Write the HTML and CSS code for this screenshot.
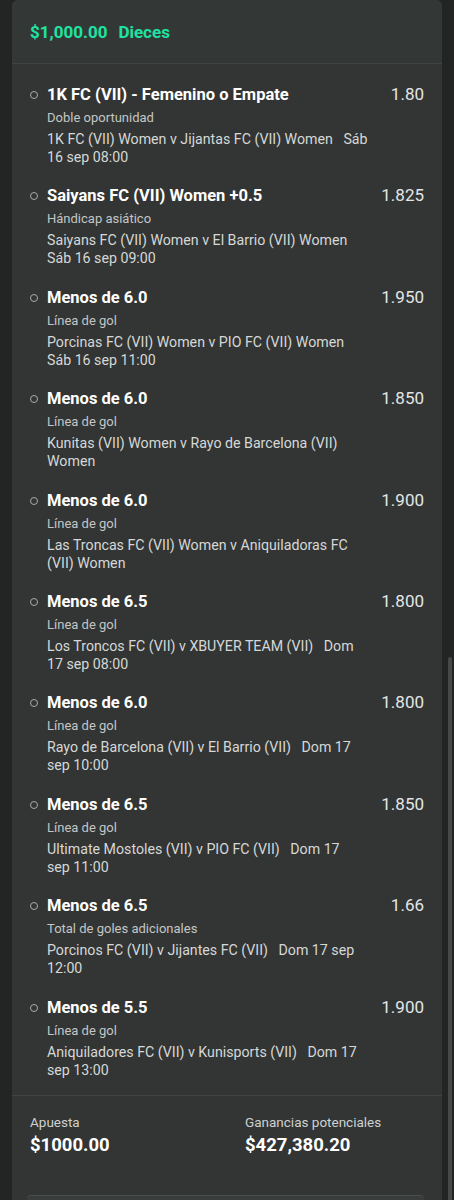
FILE: index.html
```html
<!DOCTYPE html>
<html lang="es">

<head>
	<meta charset="UTF-8">
	<meta name="viewport" content="width=device-width, initial-scale=1.0">
	<title>Boleto</title>
	<link rel="stylesheet" href="styles.css">
</head>

<body>
	<div class="slip">
		<div class="slip-head">
			<span class="stake-amount">$1,000.00</span>
			<span class="bet-type">Dieces</span>
		</div>

		<div class="legs">
			<div class="leg">
				<span class="dot"></span>
				<div class="leg-info">
					<div class="leg-title">1K FC (VII) - Femenino o Empate</div>
					<div class="leg-market">Doble oportunidad</div>
					<div class="leg-match"><span class="leg-teams">1K FC (VII) Women v Jijantas FC (VII) Women</span> Sáb 16 sep 08:00</div>
				</div>
				<div class="leg-odds">1.80</div>
			</div>

			<div class="leg">
				<span class="dot"></span>
				<div class="leg-info">
					<div class="leg-title">Saiyans FC (VII) Women +0.5</div>
					<div class="leg-market">Hándicap asiático</div>
					<div class="leg-match"><span class="leg-teams">Saiyans FC (VII) Women v El Barrio (VII) Women</span> Sáb 16 sep 09:00</div>
				</div>
				<div class="leg-odds">1.825</div>
			</div>

			<div class="leg">
				<span class="dot"></span>
				<div class="leg-info">
					<div class="leg-title">Menos de 6.0</div>
					<div class="leg-market">Línea de gol</div>
					<div class="leg-match"><span class="leg-teams">Porcinas FC (VII) Women v PIO FC (VII) Women</span> Sáb 16 sep 11:00</div>
				</div>
				<div class="leg-odds">1.950</div>
			</div>

			<div class="leg">
				<span class="dot"></span>
				<div class="leg-info">
					<div class="leg-title">Menos de 6.0</div>
					<div class="leg-market">Línea de gol</div>
					<div class="leg-match"><span class="leg-teams">Kunitas (VII) Women v Rayo de Barcelona (VII) Women</span></div>
				</div>
				<div class="leg-odds">1.850</div>
			</div>

			<div class="leg">
				<span class="dot"></span>
				<div class="leg-info">
					<div class="leg-title">Menos de 6.0</div>
					<div class="leg-market">Línea de gol</div>
					<div class="leg-match"><span class="leg-teams">Las Troncas FC (VII) Women v Aniquiladoras FC (VII) Women</span></div>
				</div>
				<div class="leg-odds">1.900</div>
			</div>

			<div class="leg">
				<span class="dot"></span>
				<div class="leg-info">
					<div class="leg-title">Menos de 6.5</div>
					<div class="leg-market">Línea de gol</div>
					<div class="leg-match"><span class="leg-teams">Los Troncos FC (VII) v XBUYER TEAM (VII)</span> Dom 17 sep 08:00</div>
				</div>
				<div class="leg-odds">1.800</div>
			</div>

			<div class="leg">
				<span class="dot"></span>
				<div class="leg-info">
					<div class="leg-title">Menos de 6.0</div>
					<div class="leg-market">Línea de gol</div>
					<div class="leg-match"><span class="leg-teams">Rayo de Barcelona (VII) v El Barrio (VII)</span> Dom 17 sep 10:00</div>
				</div>
				<div class="leg-odds">1.800</div>
			</div>

			<div class="leg">
				<span class="dot"></span>
				<div class="leg-info">
					<div class="leg-title">Menos de 6.5</div>
					<div class="leg-market">Línea de gol</div>
					<div class="leg-match"><span class="leg-teams">Ultimate Mostoles (VII) v PIO FC (VII)</span> Dom 17<br>sep 11:00</div>
				</div>
				<div class="leg-odds">1.850</div>
			</div>

			<div class="leg">
				<span class="dot"></span>
				<div class="leg-info">
					<div class="leg-title">Menos de 6.5</div>
					<div class="leg-market">Total de goles adicionales</div>
					<div class="leg-match"><span class="leg-teams">Porcinos FC (VII) v Jijantes FC (VII)</span> Dom 17 sep 12:00</div>
				</div>
				<div class="leg-odds">1.66</div>
			</div>

			<div class="leg">
				<span class="dot"></span>
				<div class="leg-info">
					<div class="leg-title">Menos de 5.5</div>
					<div class="leg-market">Línea de gol</div>
					<div class="leg-match"><span class="leg-teams">Aniquiladores FC (VII) v Kunisports (VII)</span> Dom 17 sep 13:00</div>
				</div>
				<div class="leg-odds">1.900</div>
			</div>
		</div>

		<div class="totals">
			<div class="total">
				<div class="total-label">Apuesta</div>
				<div class="total-value">$1000.00</div>
			</div>
			<div class="total">
				<div class="total-label">Ganancias potenciales</div>
				<div class="total-value">$427,380.20</div>
			</div>
		</div>

		<div class="cashout">
			<span class="cashout-label">TU APUESTA</span>
			<span class="cashout-label">GANANCIAS POTENCIALES</span>
		</div>
	</div>

	<div class="scroll-thumb"></div>
</body>

</html>
```

FILE: styles.css
```css
*,
*::before,
*::after {
	box-sizing: border-box;
}

body {
	margin: 0;
	background-color: #232524;
	font-family: Roboto, "Noto Sans", sans-serif;
	color: #e6e6e6;
}

.slip {
	margin: 0 12px;
	background-color: #323534;
	border-radius: 6px 6px 0 0;
	overflow: hidden;
}

.slip-head {
	height: 64px;
	padding: 0 18px;
	display: flex;
	align-items: center;
	gap: 11px;
	background-color: #333836;
	border-bottom: 1px solid #3f4442;
	font-size: 17px;
	font-weight: bold;
	color: #1fe3a2;
}

.legs {
	padding: 20px 18px 16px;
	display: flex;
	flex-direction: column;
	gap: 19.4px;
}

.leg {
	display: grid;
	grid-template-columns: 17px 322px 1fr;
	align-items: start;
}

.dot {
	width: 8px;
	height: 8px;
	margin-top: 7px;
	border: 1px solid #a9abaa;
	border-radius: 50%;
}

.leg-title {
	font-size: 16.5px;
	line-height: 21px;
	font-weight: bold;
	color: #ffffff;
}

.leg-market {
	margin-top: 4px;
	font-size: 13px;
	line-height: 18px;
	color: #c4c6c5;
}

.leg-match {
	margin-top: 3px;
	font-size: 14.2px;
	line-height: 18px;
	color: #d6d8d7;
}

.leg-teams {
	padding-right: 7px;
}

.leg-odds {
	justify-self: end;
	font-size: 17px;
	line-height: 21px;
	color: #e4e6e5;
}

.totals {
	display: grid;
	grid-template-columns: 215px 1fr;
	padding: 17px 18px 0;
	border-top: 1px solid #3f4442;
}

.total-label {
	font-size: 13.5px;
	line-height: 18px;
	color: #cfd1d0;
}

.total-value {
	margin-top: 2px;
	font-size: 18.5px;
	line-height: 24px;
	font-weight: bold;
	color: #ffffff;
}

.cashout {
	margin: 38px 18px 0 15px;
	height: 60px;
	padding: 2px 3px;
	display: grid;
	grid-template-columns: 215px 1fr;
	border-top: 1px solid #4a4e4c;
	background-color: #383c3a;
	border-radius: 4px 4px 0 0;
}

.cashout-label {
	font-size: 13px;
	font-weight: bold;
	color: #d0d2d1;
}

.scroll-thumb {
	position: fixed;
	right: 2px;
	top: 657px;
	width: 4px;
	height: 560px;
	border-radius: 2px;
	background-color: #464948;
}
```
